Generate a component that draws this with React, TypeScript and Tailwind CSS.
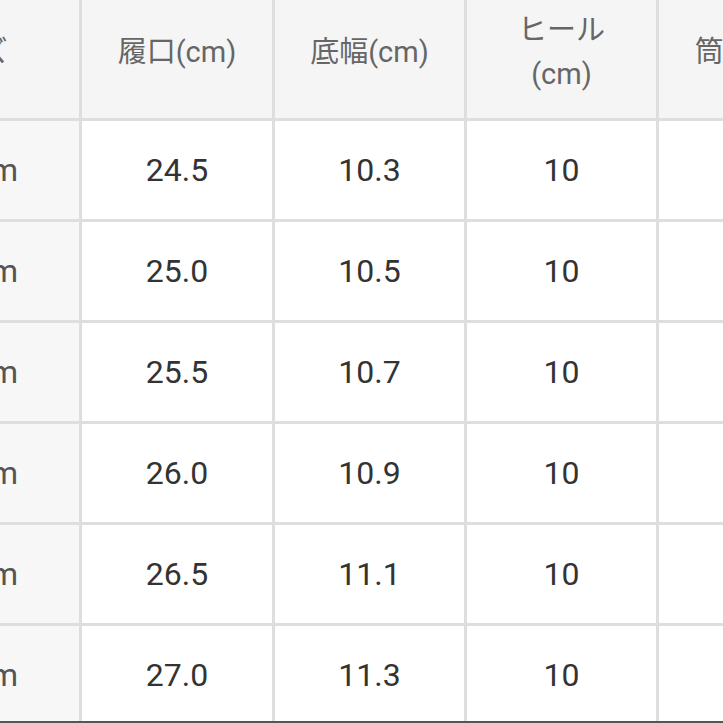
const headers = ['サイズ', '履口(cm)', '底幅(cm)', 'ヒール\n(cm)', '筒丈(cm)'];

const rows = [
  ['22.5cm', '24.5', '10.3', '10', '38.5'],
  ['23.0cm', '25.0', '10.5', '10', '38.5'],
  ['23.5cm', '25.5', '10.7', '10', '39.0'],
  ['24.0cm', '26.0', '10.9', '10', '39.0'],
  ['24.5cm', '26.5', '11.1', '10', '39.5'],
  ['25.0cm', '27.0', '11.3', '10', '39.5'],
];

export default function App() {
  return (
    <div
      className="w-[723px] h-[723px] overflow-hidden bg-white flex flex-col"
      style={{ fontFamily: "Roboto, 'Noto Sans CJK JP', sans-serif" }}
    >
      <div className="flex-1 overflow-hidden">
        {/* size table, scrolled so the first column is half hidden */}
        <div className="grid grid-cols-[229px_190px_189px_189px_190px] gap-[3px] bg-[#dedede] w-max -ml-[150px] -mt-[14px]">
          {headers.map((h) => (
            <div
              key={h}
              className="h-[132px] bg-[#f5f5f5] flex items-center justify-center text-center whitespace-pre-line text-[29px] leading-[44px] text-[#666]"
            >
              {h}
            </div>
          ))}
          {rows.map((row) =>
            row.map((cell, i) => (
              <div
                key={row[0] + i}
                className={`h-[98px] flex items-center justify-center text-[32px] ${
                  i === 0 ? 'bg-[#f7f7f7] text-[#555]' : 'bg-white text-[#333]'
                }`}
              >
                {cell}
              </div>
            ))
          )}
        </div>
      </div>
      <div className="h-[2px] bg-[#555]" />
    </div>
  );
}
